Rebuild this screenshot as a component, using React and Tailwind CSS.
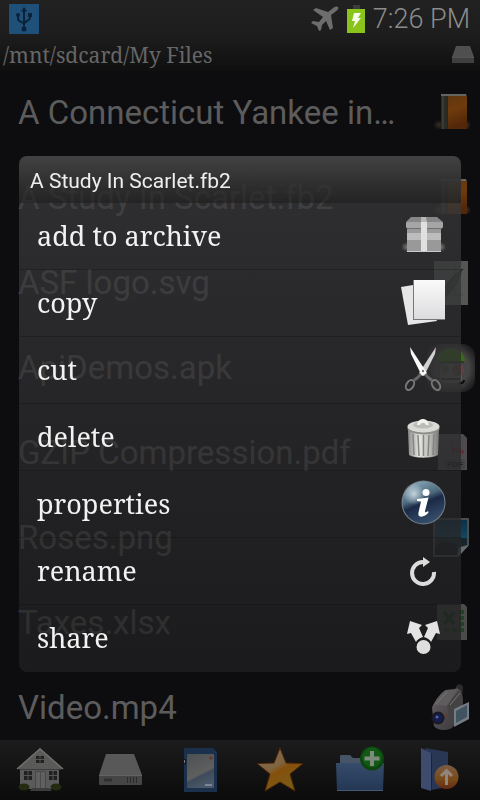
import { useState } from "react";

const serif = "font-['Droid_Serif','Noto_Serif','DejaVu_Serif_Condensed',serif]";

function Icon({ children, className = "size-12 shrink-0" }) {
  return (
    <svg viewBox="0 0 48 48" className={className} aria-hidden="true">
      {children}
    </svg>
  );
}

/* ---------- file type icons ---------- */

function BookIcon() {
  return (
    <Icon>
      <defs>
        <linearGradient id="bookCover" x1="0" y1="0" x2="0.3" y2="1">
          <stop offset="0" stopColor="#5d3610" />
          <stop offset="0.5" stopColor="#6e3b0c" />
          <stop offset="1" stopColor="#532709" />
        </linearGradient>
        <radialGradient id="bookShadow">
          <stop offset="0" stopColor="#3a2c24" />
          <stop offset="1" stopColor="#3a2c24" stopOpacity="0" />
        </radialGradient>
      </defs>
      <ellipse cx="12" cy="36" rx="6" ry="5" fill="url(#bookShadow)" />
      <ellipse cx="40" cy="36" rx="4" ry="5" fill="url(#bookShadow)" />
      <path d="M14 5 H39 L40 8 H14Z" fill="#66645f" />
      <rect x="14" y="7" width="26" height="33" fill="url(#bookCover)" />
      <rect x="14" y="7" width="6" height="33" fill="#2c2c27" />
      <path d="M16 7 V40" stroke="#454a42" strokeWidth="1" />
      <path d="M20.5 7 V40" stroke="#3b200b" strokeWidth="1" />
    </Icon>
  );
}

function SvgFileIcon() {
  return (
    <Icon>
      <rect x="7" y="2" width="34" height="44" fill="#555653" />
      <path d="M12 36 H36 M28 8 V40" stroke="#454643" strokeWidth="1" />
      <path d="M18 39 C18 27 24 19 35 11 C34 20 27 31 18 39Z" fill="#353632" />
      <path d="M15 34 C21 23 27 16 36 10" stroke="#22231f" strokeWidth="1.5" fill="none" />
    </Icon>
  );
}

function ApkIcon() {
  return (
    <Icon>
      <defs>
        <radialGradient id="apkGlow" r="0.62">
          <stop offset="0.6" stopColor="#444" />
          <stop offset="1" stopColor="#444" stopOpacity="0.15" />
        </radialGradient>
      </defs>
      <rect x="0" y="0" width="48" height="48" rx="12" fill="url(#apkGlow)" />
      <path d="M10 17 C11 0 37 0 38 17Z" fill="#3b6a14" />
      <path d="M12 17 H37 V19 H12Z" fill="#2a3f18" />
      <rect x="13" y="20" width="22" height="19" rx="5" fill="#5e5e58" />
      <circle cx="18" cy="25" r="4" fill="#3f4d35" />
      <circle cx="31" cy="26" r="6" fill="#624341" />
      <path d="M14 35 H33" stroke="#2e2e2c" strokeWidth="2" />
      <path d="M32 39 C35 40 37 38 37 36" stroke="#0b0b0b" strokeWidth="2" fill="none" />
    </Icon>
  );
}

function PdfIcon() {
  return (
    <Icon>
      <path d="M11 5 H36 L40 9 V41 H11Z" fill="#4f4b4d" />
      <path d="M25 12 C25 21 31 25 37 22 M26 26 C23 18 34 16 36 25" stroke="#63292c" strokeWidth="1.5" fill="none" />
      <rect x="17" y="30" width="21" height="10" fill="#454244" />
      <text x="20" y="38" fontSize="8" fontWeight="700" fontFamily="Liberation Sans, sans-serif" fill="#1b191a">
        PDF
      </text>
    </Icon>
  );
}

function PhotoIcon() {
  return (
    <Icon>
      <defs>
        <linearGradient id="photoSky" x1="0" y1="0" x2="0" y2="1">
          <stop offset="0" stopColor="#0b3047" />
          <stop offset="1" stopColor="#154d68" />
        </linearGradient>
      </defs>
      <path d="M6 4 H42 V31 L31 43 H6Z" fill="#4a4d4e" />
      <path d="M8 6 H40 V28 H8Z" fill="url(#photoSky)" />
      <path d="M8 24 H40 V31 L32 33 L30 41 H8Z" fill="#15252d" />
      <path d="M8 32 C13 30 15 27 20 28 L26 29 L30 31 V41 H8Z" fill="#0d0f10" />
      <path d="M31 43 L32 34 L42 31Z" fill="#666b6d" />
    </Icon>
  );
}

function SheetIcon() {
  return (
    <Icon>
      <path d="M10 5 H37 L40 8 V41 H10Z" fill="#4a4c4a" />
      <path d="M17 13 L27 25 M27 13 L17 25" stroke="#183c1b" strokeWidth="3.5" />
      <path d="M32 13 h5 M32 19 h5 M32 25 h5 M17 31 h5 M25 31 h5 M32 31 h5" stroke="#204423" strokeWidth="4" />
    </Icon>
  );
}

function CameraIcon() {
  return (
    <Icon>
      <defs>
        <linearGradient id="camSide" x1="0" y1="0" x2="1" y2="1">
          <stop offset="0" stopColor="#656164" />
          <stop offset="1" stopColor="#373436" />
        </linearGradient>
      </defs>
      <path d="M27 7 L30 1 C33 -1 37 2 36 5 L35 13 L29 15Z" fill="#2c2a2c" />
      <path d="M29 4 L34 8" stroke="#454246" strokeWidth="2" />
      <path d="M5 24 C8 16 15 8 19 6 L31 5 C36 8 37 16 35 27 L25 44 C20 47 10 47 7 42Z" fill="url(#camSide)" />
      <path d="M5 24 C8 16 15 8 19 6 L31 5 L20 22 C14 20 9 21 5 24Z" fill="#5f5c5e" />
      <path d="M20 22 L31 7 C36 9 36 17 35 27 L25 44Z" fill="#454244" />
      <path d="M9 20 L20 8 M23 21 L33 9" stroke="#7a7679" />
      <path d="M27 25 L42 18 V35 L27 43Z" fill="#757d83" />
      <path d="M29 27 L40 21 V33 L29 39Z" fill="#3f5361" />
      <circle cx="11" cy="34" r="6.5" fill="#1c1a20" />
      <circle cx="11" cy="34" r="4.500" fill="#141d4d" />
      <circle cx="10" cy="33" r="1.500" fill="#5a659c" />
      <circle cx="20" cy="31" r="1" fill="#8b2a22" />
    </Icon>
  );
}

/* ---------- context menu icons ---------- */

function ArchiveIcon() {
  return (
    <Icon>
      <defs>
        <radialGradient id="boxShadow">
          <stop offset="0" stopColor="#777" />
          <stop offset="1" stopColor="#777" stopOpacity="0" />
        </radialGradient>
      </defs>
      <ellipse cx="8" cy="35" rx="6" ry="5" fill="url(#boxShadow)" />
      <ellipse cx="42" cy="35" rx="5" ry="5" fill="url(#boxShadow)" />
      <path d="M12 5 H38 L44 10 H7Z" fill="#868686" />
      <rect x="8" y="15" width="34" height="25" fill="#999" />
      <rect x="8" y="21" width="34" height="7" fill="#bcbcbc" />
      <rect x="7" y="10" width="37" height="6" rx="1" fill="#a5a5a5" />
      <path d="M8 16.5 H43" stroke="#707070" strokeWidth="1" />
      <path d="M22 10 H28 V40 H22Z" fill="#e0e0e0" />
      <path d="M22 5 H27 L28 10 H22Z" fill="#b8b8b8" />
      <path d="M8 39.500 H42" stroke="#c9c9c9" strokeWidth="1" />
    </Icon>
  );
}

function CopyIcon() {
  return (
    <Icon>
      <defs>
        <linearGradient id="paper" x1="0" y1="0" x2="0" y2="1">
          <stop offset="0" stopColor="#fafafa" />
          <stop offset="1" stopColor="#dcdcde" />
        </linearGradient>
      </defs>
      <path d="M2 8 L20 5 L38 42 L9 46Z" fill="#e6e6e6" />
      <rect x="14" y="1" width="32" height="40" fill="#777" />
      <rect x="15" y="1" width="31" height="39" fill="url(#paper)" />
    </Icon>
  );
}

function CutIcon() {
  return (
    <Icon>
      <path d="M23 27 C20 30 18 33 15 34" stroke="#666" strokeWidth="3" fill="none" />
      <path d="M25 27 C28 30 30 33 33 34" stroke="#666" strokeWidth="3" fill="none" />
      <ellipse cx="11" cy="39" rx="3.500" ry="5.500" transform="rotate(32 11 39)" stroke="#777" strokeWidth="2" fill="none" />
      <ellipse cx="37" cy="39" rx="3.500" ry="5.500" transform="rotate(-32 37 39)" stroke="#777" strokeWidth="2" fill="none" />
      <path d="M37 1 L36 8 L25 30 L20 27Z" fill="#d0d0d0" />
      <path d="M11 1 L12 8 L23 30 L28 27Z" fill="#fafafa" />
      <circle cx="24" cy="25" r="1.200" fill="#777" />
    </Icon>
  );
}

function TrashIcon() {
  return (
    <Icon>
      <defs>
        <linearGradient id="can" x1="0" y1="0" x2="1" y2="0">
          <stop offset="0" stopColor="#8b8b88" />
          <stop offset="0.35" stopColor="#e6e6e2" />
          <stop offset="0.7" stopColor="#bcbcb8" />
          <stop offset="1" stopColor="#777774" />
        </linearGradient>
      </defs>
      <path d="M9 17 H40 L39 42 C34 45.500 15 45.500 10 42Z" fill="url(#can)" />
      <path d="M14 21 L15 42 M19 22 L20 43 M24.500 22 V43 M30 22 L29 43 M35 21 L34 42" stroke="#858582" strokeWidth="1.500" />
      <ellipse cx="24.500" cy="15.500" rx="16" ry="6" fill="#8d8d89" />
      <ellipse cx="24.500" cy="13.500" rx="16" ry="6" fill="#dadad6" />
      <ellipse cx="24" cy="12" rx="10" ry="3.500" fill="#bcbcb8" />
      <path d="M18 12 C19 4 29 4 30 12 H27 C26 9 22 9 21 12Z" fill="#f1f1ee" />
    </Icon>
  );
}

function InfoIcon() {
  return (
    <Icon>
      <defs>
        <linearGradient id="orb" x1="0.200" y1="0" x2="0.600" y2="1">
          <stop offset="0" stopColor="#8ba9b8" />
          <stop offset="0.400" stopColor="#4c6a7e" />
          <stop offset="0.550" stopColor="#1b2946" />
          <stop offset="1" stopColor="#37506c" />
        </linearGradient>
        <radialGradient id="orbShine">
          <stop offset="0" stopColor="#dbe8ee" stopOpacity="0.800" />
          <stop offset="1" stopColor="#dbe8ee" stopOpacity="0" />
        </radialGradient>
      </defs>
      <circle cx="24.500" cy="22.500" r="22" fill="#73818d" />
      <circle cx="24.500" cy="22.500" r="21" fill="url(#orb)" />
      <circle cx="15" cy="14" r="11" fill="url(#orbShine)" />
      <circle cx="27" cy="12.500" r="3.500" fill="#fff" />
      <path d="M18 19 L29.500 17.500 L26 31 C25.800 33 27 32.500 29 31 L29.500 32.500 C26 37.500 18 38.500 19.500 32.500 L22 21.500 L18 21Z" fill="#fff" />
    </Icon>
  );
}

function RenameIcon() {
  return (
    <Icon>
      <path d="M35 25 A11 11 0 1 1 24 15" stroke="#dcdcdc" strokeWidth="4" fill="none" />
      <path d="M24 10 L31 15 L24 20Z" fill="#dcdcdc" />
    </Icon>
  );
}

function ShareIcon() {
  return (
    <Icon>
      <path d="M8 20 L11 7 L23 11 L20 14 L24 23 C20 24 18 26 17 28 L12 19Z" fill="#e3e3e3" />
      <path d="M41 20 L38 7 L26 11 L29 14 L25 23 C29 24 31 26 32 28 L37 19Z" fill="#e3e3e3" />
      <circle cx="24.500" cy="33" r="7" fill="#dedede" />
    </Icon>
  );
}

/* ---------- toolbar icons ---------- */

function HomeIcon() {
  return (
    <Icon>
      <path d="M5 20 L24 4 L43 20 V43 H4 V22Z" fill="#5a5a5a" />
      <path d="M24 2 L47 23 L24 22 L1 23Z" fill="#5a5a59" />
      <path d="M1 23 L24 3 L47 23" stroke="#6f6f6d" strokeWidth="1.500" fill="none" />
      <path d="M3 23.500 H45" stroke="#3b3b3b" strokeWidth="1" />
      <rect x="20" y="10" width="8" height="7" fill="#20221f" />
      <path d="M24 10 V17 M20 13.500 H28" stroke="#555" strokeWidth="1" />
      <rect x="8" y="25" width="8" height="9" fill="#20221f" />
      <rect x="33" y="25" width="8" height="9" fill="#20221f" />
      <path d="M12 25 V34 M8 29.500 H16 M37 25 V34 M33 29.500 H41" stroke="#555" strokeWidth="1" />
      <rect x="19.500" y="25.500" width="10" height="17" fill="#606060" stroke="#484848" />
      <path d="M24.500 26 V42" stroke="#4b4b4b" />
      <path d="M16 42 H33 L36 45 H14Z" fill="#3c3c3a" />
      <ellipse cx="8" cy="41" rx="5.500" ry="3.500" fill="#232c10" />
      <ellipse cx="40" cy="41" rx="5.500" ry="3.500" fill="#232c10" />
    </Icon>
  );
}

function DriveIcon() {
  return (
    <Icon>
      <path d="M10 8 H38 L46 29 H3Z" fill="#585858" />
      <rect x="3" y="29" width="43" height="10" rx="1" fill="#454545" />
      <path d="M3 29.500 H46" stroke="#636363" />
      <path d="M8 34 H16" stroke="#303030" strokeWidth="3" />
      <path d="M31.500 31 V37 M34.500 31 V37 M37.500 31 V37 M40.500 31 V37" stroke="#2b2b2b" />
    </Icon>
  );
}

function SdCardIcon() {
  return (
    <Icon>
      <defs>
        <linearGradient id="sdLabel" x1="0.100" y1="0" x2="0.500" y2="1">
          <stop offset="0" stopColor="#4c5154" />
          <stop offset="0.640" stopColor="#5f5f5e" />
          <stop offset="0.700" stopColor="#3d4a59" />
          <stop offset="1" stopColor="#49596a" />
        </linearGradient>
      </defs>
      <path d="M9 2 H37 L41 6 V46 H8 V18 H10 V13 H8 V3Z" fill="#1b304b" />
      <rect x="11" y="8" width="27" height="34" rx="1" fill="url(#sdLabel)" />
      <path d="M35 10 V14 M33 12 H37" stroke="#6c2a28" />
      <path d="M29 39 H36" stroke="#7b8693" strokeWidth="2" />
      <path d="M8.500 14 V17" stroke="#777" />
    </Icon>
  );
}

function StarIcon() {
  return (
    <Icon>
      <defs>
        <linearGradient id="starFill" x1="0.200" y1="0.100" x2="0.700" y2="0.900">
          <stop offset="0" stopColor="#7d6b52" />
          <stop offset="0.400" stopColor="#806440" />
          <stop offset="0.550" stopColor="#84500c" />
          <stop offset="1" stopColor="#7a5c16" />
        </linearGradient>
      </defs>
      <path
        d="M24 2 L30 17 L47 17.500 L34 28 L39 45 L24 36 L9 45 L14 28 L1 17.500 L18 17Z"
        fill="url(#starFill)"
        stroke="#4c2406"
        strokeLinejoin="round"
      />
    </Icon>
  );
}

function NewFolderIcon() {
  return (
    <Icon>
      <defs>
        <linearGradient id="folderFront" x1="0" y1="0" x2="0" y2="1">
          <stop offset="0" stopColor="#364c6a" />
          <stop offset="1" stopColor="#233755" />
        </linearGradient>
      </defs>
      <path d="M4 10 C4 9 5 9 6 9 H14 L17 12 H44 V20 H4Z" fill="#465465" />
      <path d="M0 17 H48 L47 45 H1Z" fill="url(#folderFront)" />
      <path d="M1 44.500 H47" stroke="#455a78" />
      <circle cx="36" cy="12.500" r="12" fill="#0c450e" />
      <circle cx="36" cy="11.500" r="10" fill="#125816" />
      <path d="M36 5 V20 M28.500 12.500 H43.500" stroke="#7d8a7c" strokeWidth="4" />
    </Icon>
  );
}

function FolderUpIcon() {
  return (
    <Icon>
      <defs>
        <linearGradient id="upBadge" x1="0" y1="0" x2="0" y2="1">
          <stop offset="0" stopColor="#7c5c44" />
          <stop offset="0.600" stopColor="#784919" />
          <stop offset="1" stopColor="#622a12" />
        </linearGradient>
      </defs>
      <path d="M9 2 L32 6 V41 L15 44Z" fill="#293755" />
      <path d="M5 2 L15 7 V45 L5 42Z" fill="#3c4b6e" />
      <path d="M15.500 7 V44" stroke="#1a243f" />
      <circle cx="30.500" cy="31" r="12" fill="url(#upBadge)" />
      <path d="M30.500 39 V25 M25 30 L30.500 24.500 L36 30" stroke="#90867c" strokeWidth="3" fill="none" />
    </Icon>
  );
}

const files = [
  { name: "A Connecticut Yankee in…", icon: BookIcon },
  { name: "A Study In Scarlet.fb2", icon: BookIcon },
  { name: "ASF logo.svg", icon: SvgFileIcon },
  { name: "ApiDemos.apk", icon: ApkIcon },
  { name: "GZIP Compression.pdf", icon: PdfIcon },
  { name: "Roses.png", icon: PhotoIcon },
  { name: "Taxes.xlsx", icon: SheetIcon },
  { name: "Video.mp4", icon: CameraIcon },
];

const actions = [
  { label: "add to archive", icon: ArchiveIcon },
  { label: "copy", icon: CopyIcon },
  { label: "cut", icon: CutIcon },
  { label: "delete", icon: TrashIcon },
  { label: "properties", icon: InfoIcon },
  { label: "rename", icon: RenameIcon },
  { label: "share", icon: ShareIcon },
];

const tools = [
  { label: "Home", icon: HomeIcon },
  { label: "Storage", icon: DriveIcon },
  { label: "SD card", icon: SdCardIcon },
  { label: "Favorites", icon: StarIcon },
  { label: "New folder", icon: NewFolderIcon },
  { label: "Up one level", icon: FolderUpIcon },
];

function StatusBar() {
  return (
    <div className="flex h-[38px] shrink-0 items-center gap-2 pl-[9px] pr-[10px]">
      <svg viewBox="0 0 30 30" className="size-[30px]" aria-hidden="true">
        <rect x="0" y="0" width="30" height="30" rx="1" fill="#1f5079" />
        <path d="M15 6 V25 M9 12 V15 C9 18 15 18 15 20 M21 11 V14 C21 17 15 17 15 20" stroke="#0b2238" strokeWidth="2" fill="none" />
        <path d="M15 3 L18 7.500 H12Z" fill="#0b2238" />
        <circle cx="15" cy="25" r="2.500" fill="#0b2238" />
        <circle cx="9" cy="11" r="2" fill="#0b2238" />
        <rect x="19" y="9" width="4" height="4" fill="#0b2238" />
      </svg>
      <svg viewBox="0 0 28 26" className="ml-auto h-[26px] w-7" aria-hidden="true">
        <path
          d="M27 1 C25 0 23 1 21 3 L17 6 L5 2 L2 4 L12 11 L8 16 L2 15 L0 17 L6 20 L8 25 L10 24 L11 19 L15 15 L19 24 L22 22 L20 9 L24 6 C27 4 28 2 27 1Z"
          fill="#6d6d6d"
        />
      </svg>
      <svg viewBox="0 0 18 28" className="h-7 w-[18px]" aria-hidden="true">
        <rect x="6" y="0" width="7" height="4" fill="#3c3c3c" />
        <rect x="0" y="4" width="18" height="24" fill="#8ac41a" />
        <path d="M7 8 H14 L11 13 H14 L6 23 L8 16 H5Z" fill="#f4f9e8" />
      </svg>
      <span className="font-['Roboto',sans-serif] text-[27px] leading-8 font-light text-[#8c8c8c]">7:26 PM</span>
    </div>
  );
}

function PathBar() {
  return (
    <div className="flex h-[33px] shrink-0 items-center justify-between pl-[3px] pr-[6px]">
      <span className={`${serif} text-[21px] leading-8 text-[#666]`}>/mnt/sdcard/My Files</span>
      <svg viewBox="0 0 22 17" className="h-[17px] w-[22px]" aria-hidden="true">
        <path d="M4 0 H18 L22 11 H0Z" fill="#4f4f4f" />
        <rect x="0" y="11" width="22" height="6" fill="#3f3f3f" />
        <path d="M0 11.500 H22" stroke="#555" />
      </svg>
    </div>
  );
}

function FileList() {
  return (
    <ul className="min-h-0 flex-1 overflow-hidden">
      {files.map(({ name, icon: FileIcon }) => (
        <li key={name}>
          <button type="button" className="flex h-[85px] w-full items-center justify-between pb-px pl-[18px] pr-[5px] text-left">
            <span className="truncate font-['Roboto',sans-serif] text-[33px] leading-10 text-[#5c5c5d]">{name}</span>
            <FileIcon />
          </button>
        </li>
      ))}
    </ul>
  );
}

function Toolbar() {
  return (
    <nav className="flex h-[60px] shrink-0 bg-linear-to-b from-[#1c1c1c] to-[#0b0b0b]">
      {tools.map(({ label, icon: ToolIcon }) => (
        <button key={label} type="button" aria-label={label} className="flex flex-1 items-center justify-center">
          <ToolIcon />
        </button>
      ))}
    </nav>
  );
}

function ContextMenu({ title, onClose }) {
  return (
    <div className="fixed inset-0 z-10 flex items-center px-[19px] pt-7" onClick={onClose}>
      <div role="dialog" aria-label={title} className="w-full overflow-hidden rounded-lg">
        <h2 className="flex h-[47px] items-center bg-linear-to-b from-[#424242] to-[#262626]/90 px-[11px] pt-[2px] font-['Roboto',sans-serif] text-[21px] leading-6 text-[#eee]">
          {title}
        </h2>
        <ul className="bg-linear-to-b from-[#38383a]/78 to-[#202021]/78">
          {actions.map(({ label, icon: ActionIcon }) => (
            <li key={label} className="border-b border-black/20 last:border-transparent">
              <button type="button" className="flex h-[66px] w-full items-center justify-between pl-[18px] pr-[14px] text-left">
                <span className={`${serif} text-[27px] leading-9 text-[#f2f2f2]`}>{label}</span>
                <ActionIcon />
              </button>
            </li>
          ))}
        </ul>
      </div>
    </div>
  );
}

export default function App() {
  const [open, setOpen] = useState(true);

  return (
    <div className="flex h-screen flex-col bg-[#0d0d0f]">
      <header className="bg-linear-to-b from-[#212121] via-[#1d1d1d] to-[#0f0f10]">
        <StatusBar />
        <PathBar />
      </header>
      <FileList />
      <Toolbar />
      {open && <ContextMenu title="A Study In Scarlet.fb2" onClose={() => setOpen(false)} />}
    </div>
  );
}
